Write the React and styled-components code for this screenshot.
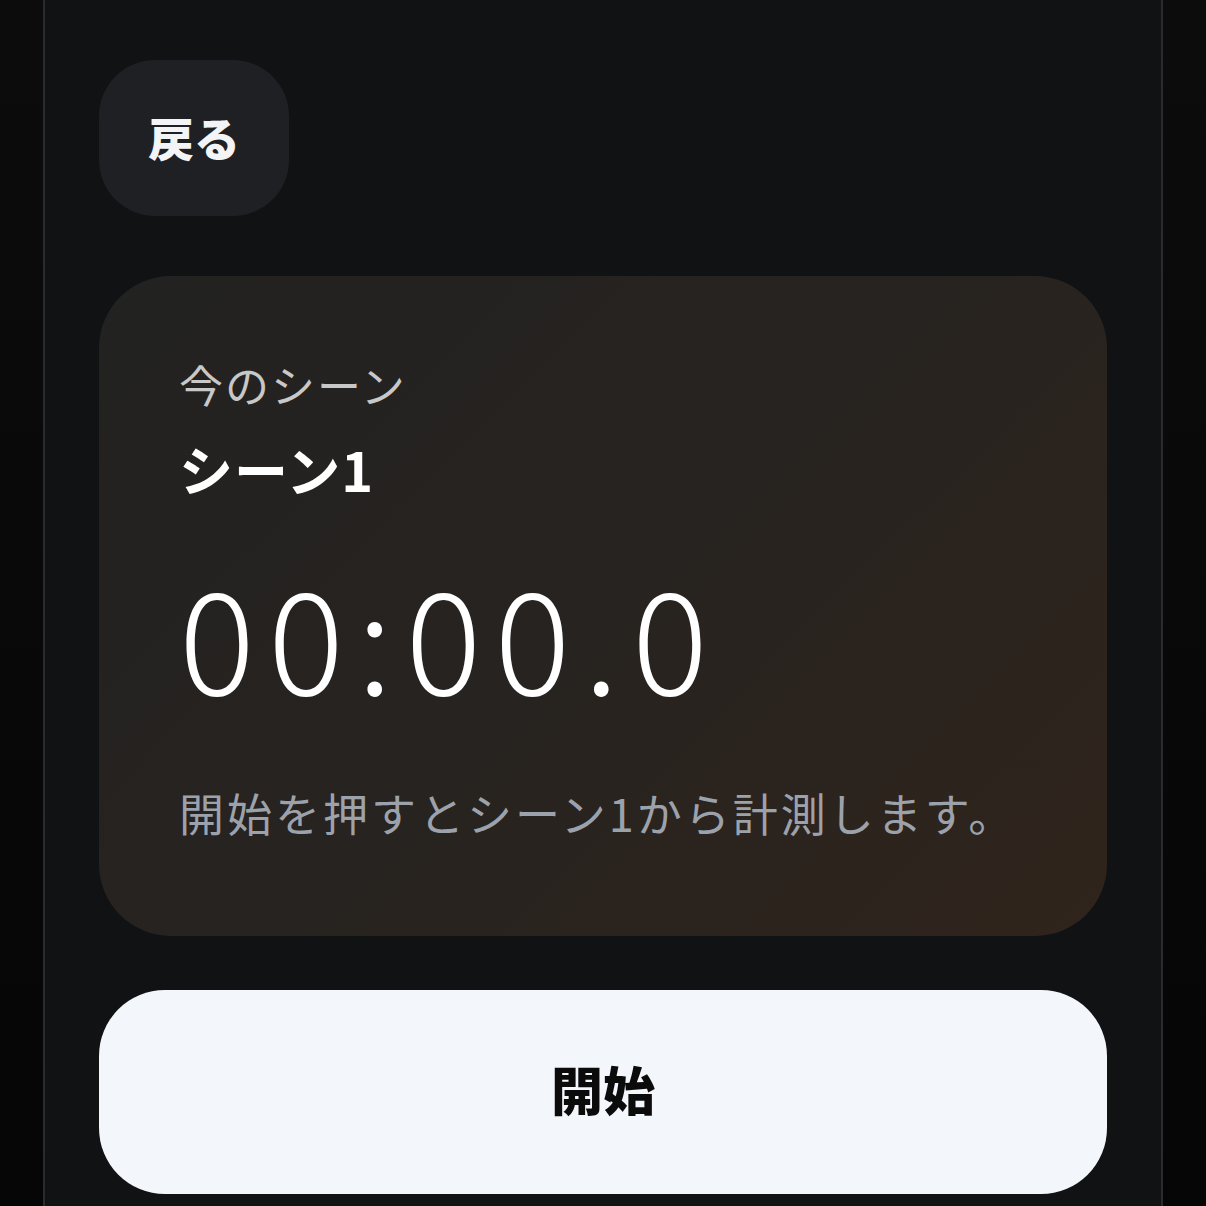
import React from 'react';
import styled, { createGlobalStyle } from 'styled-components';

const GlobalStyle = createGlobalStyle`
  html, body {
    margin: 0;
    padding: 0;
  }
  body {
    background: linear-gradient(180deg, #0c0c0c 0%, #050505 100%);
    font-family: "Noto Sans CJK JP", "Noto Sans", sans-serif;
    color: #f3f4f6;
    min-height: 100vh;
  }
  * {
    box-sizing: border-box;
  }
`;

const Screen = styled.main`
  width: 1120px;
  min-height: 1206px;
  margin: 0 auto;
  padding: 60px 54px 40px;
  background-color: #111214;
  border-left: 2px solid #2a2b2e;
  border-right: 2px solid #2a2b2e;
  display: flex;
  flex-direction: column;
  align-items: flex-start;
`;

const BackButton = styled.button`
  width: 190px;
  height: 156px;
  padding: 0 0 4px;
  border: none;
  border-radius: 56px;
  background-color: #1f2023;
  color: #f3f4f6;
  font-family: inherit;
  font-size: 46px;
  font-weight: 900;
  cursor: pointer;
  &:hover {
    background-color: #26272b;
  }
`;

const SceneCard = styled.section`
  align-self: stretch;
  margin-top: 60px;
  height: 660px;
  padding: 78px 80px;
  border-radius: 72px;
  background: linear-gradient(135deg, #222222 0%, #272320 50%, #30241c 100%);
  display: flex;
  flex-direction: column;
`;

const Label = styled.div`
  font-size: 44px;
  line-height: 1.4;
  letter-spacing: 2px;
  color: #c8c8c8;
`;

const SceneName = styled.div`
  margin-top: 18px;
  font-size: 54px;
  line-height: 1.3;
  font-weight: 700;
  letter-spacing: 1px;
  color: #ffffff;
`;

const Timer = styled.div`
  margin-top: 58px;
  font-size: 142px;
  line-height: 1;
  font-weight: 200;
  letter-spacing: 13px;
  color: #ffffff;
  font-variant-numeric: tabular-nums;
`;

const Hint = styled.p`
  margin: 75px 0 0;
  font-size: 45px;
  line-height: 1.5;
  letter-spacing: 3px;
  color: #9ca2ab;
`;

const StartButton = styled.button`
  align-self: stretch;
  margin-top: 54px;
  height: 204px;
  padding: 0 0 8px;
  border: none;
  border-radius: 66px;
  background-color: #f3f6fa;
  color: #0b0b0b;
  font-family: inherit;
  font-size: 52px;
  font-weight: 900;
  cursor: pointer;
  &:hover {
    background-color: #ffffff;
  }
`;

const App = () => {
  return (
    <>
      <GlobalStyle />
      <Screen>
        <BackButton>戻る</BackButton>
        <SceneCard>
          <Label>今のシーン</Label>
          <SceneName>シーン1</SceneName>
          <Timer>00:00.0</Timer>
          <Hint>開始を押すとシーン1から計測します。</Hint>
        </SceneCard>
        <StartButton>開始</StartButton>
      </Screen>
    </>
  );
};

export default App;
